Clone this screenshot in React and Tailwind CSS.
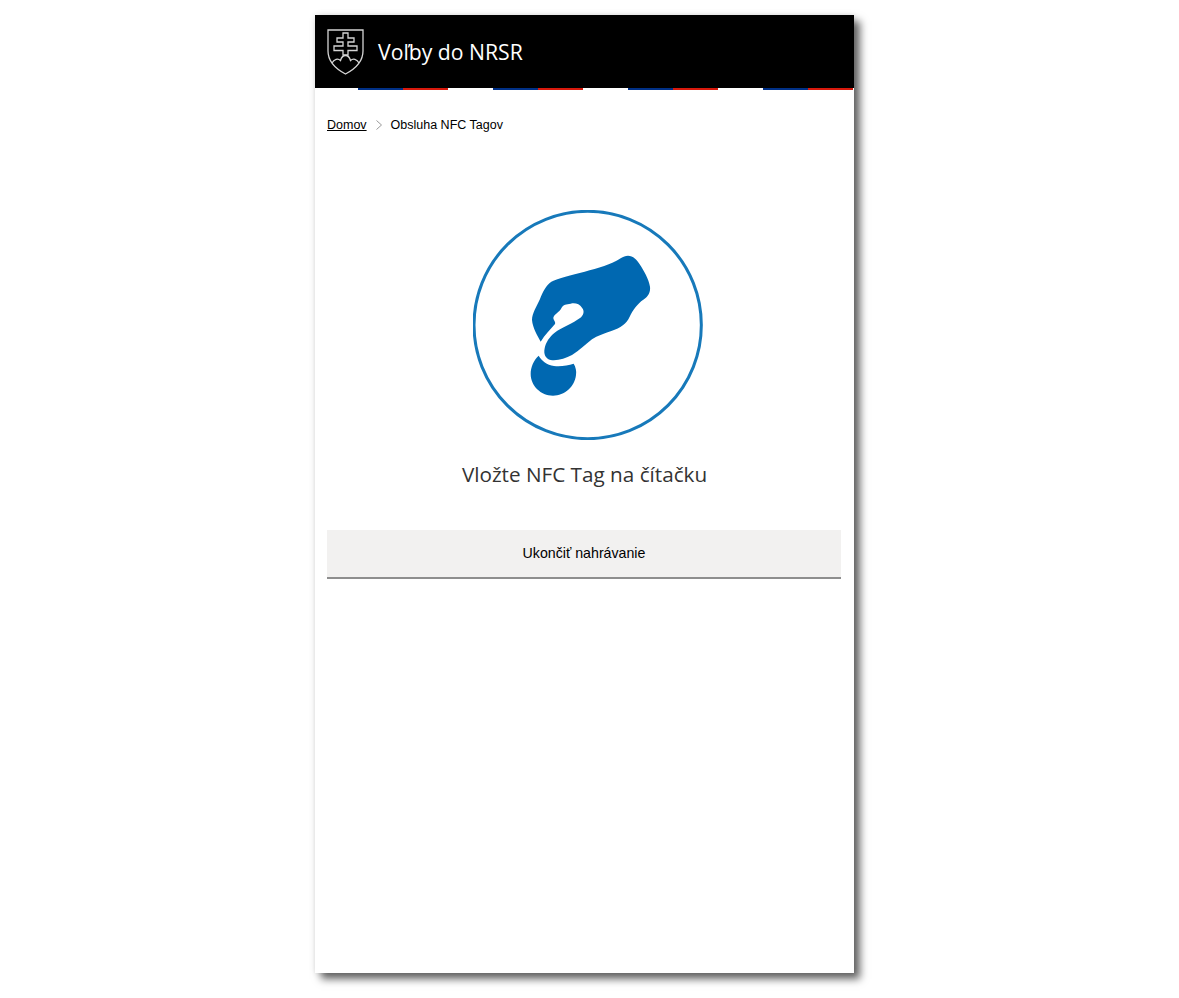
const stripeGroups = [0, 1, 2, 3];

function Shield() {
    return (
        <svg width="37" height="46" viewBox="0 0 37 46" fill="none" stroke="#d4d4d4" strokeWidth="1.3">
            {/* shield outline */}
            <path d="M1 1 H36 V22 C36 33 28 40 18.5 45 C9 40 1 33 1 22 Z" />
            {/* double cross */}
            <path d="M16 4 H21 V9 H27 V13 H21 V17 H30 V21.5 H21 V26 H16 V21.5 H7 V17 H16 V13 H10 V9 H16 Z" />
            {/* hills */}
            <path d="M5 34 C7 30 11 29 13.5 31.5 C14.5 28 17 26.5 18.5 26.5 C20 26.5 22.5 28 23.5 31.5 C26 29 30 30 32 34" />
        </svg>
    );
}

function HandIcon() {
    return (
        <svg className="w-[230px] h-[230px]" viewBox="25 15 690 690" fill="none">
            <circle cx="369" cy="360" r="341" stroke="#1779ba" strokeWidth="9" />
            <path
                fill="#0068b1"
                d="M490 152 C505 152 518 165 525 178 C538 198 552 222 556 245 C558 262 550 275 536 284 C518 296 505 315 495 335 C486 356 468 368 440 378 C420 385 398 392 382 403 C362 418 345 436 322 450 C302 461 278 468 258 465 C243 462 236 448 240 430 C243 412 255 395 270 383 C290 368 325 355 345 340 C358 330 360 318 352 308 C345 296 330 293 318 296 C305 298 296 298 290 310 C284 322 268 328 266 338 C266 346 274 350 271 357 C258 372 240 390 228 410 C218 392 204 368 202 345 C202 325 216 305 226 282 C234 262 244 240 260 230 C280 220 320 210 360 200 C400 190 440 178 468 160 C476 155 482 152 490 152 Z"
            />
            <path
                fill="#0068b1"
                d="M222 452 C232 468 246 480 268 483 C288 485 310 482 327 476 C333 486 336 498 334 510 C330 545 300 572 265 572 C228 572 198 542 198 507 C198 486 207 466 222 452 Z"
            />
        </svg>
    );
}

export default function App() {
    return (
        <div className="pl-[315px] pt-[15px] bg-white min-h-[998px] font-['Liberation_Sans',sans-serif]">
            <div className="w-[539px] h-[958px] bg-white flex flex-col shadow-[0_0_6px_rgba(0,0,0,0.12),6px_6px_8px_rgba(0,0,0,0.6)]">
                <header className="h-[73px] bg-black flex items-center pl-3 gap-[14px]">
                    <Shield />
                    <span className="text-white text-[21.2px] leading-[30px] mt-[1px] font-['Open_Sans',sans-serif]">Voľby do NRSR</span>
                </header>

                <div className="h-[2px] flex pl-[43px]">
                    {stripeGroups.map((g) => (
                        <div key={g} className="flex">
                            <div className="w-[45px] bg-[#003087]" />
                            <div className="w-[45px] bg-[#d9190c]" />
                            {g < 3 && <div className="w-[45px]" />}
                        </div>
                    ))}
                </div>

                <nav className="flex items-center pl-3 mt-[28px] text-[12.5px] leading-[14px] text-black">
                    <a className="underline">Domov</a>
                    <svg className="ml-[9px] mr-[9px]" width="6" height="10" viewBox="0 0 6 10" fill="none" stroke="#999" strokeWidth="1">
                        <path d="M0.5 0.5 L5.5 5 L0.5 9.5" />
                    </svg>
                    <span>Obsluha NFC Tagov</span>
                </nav>

                <div className="flex justify-center pl-[6px] mt-[78px]">
                    <HandIcon />
                </div>

                <p className="mt-[19px] text-center text-[20.7px] leading-[30px] text-[#333] font-['Open_Sans',sans-serif]">
                    Vložte NFC Tag na čítačku
                </p>

                <button className="mt-[41px] ml-3 w-[514px] h-[49px] bg-[#f2f1f0] border-b-2 border-[#8e8e8e] text-[14.2px] text-black">
                    Ukončiť nahrávanie
                </button>
            </div>
        </div>
    );
}
